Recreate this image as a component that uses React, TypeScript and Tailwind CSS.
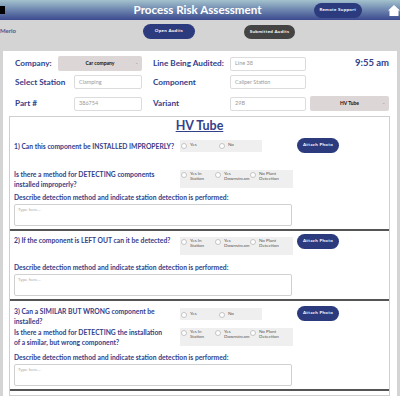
import React from 'react';

const NAVY = 'text-[#34408a]';

const Radio = ({ label }: { label: React.ReactNode }) => (
  <div className="flex items-start gap-[3px]">
    <span className="mt-[1px] h-[6px] w-[6px] shrink-0 rounded-full border border-[#c4c4c4] bg-white" />
    <span className="text-[4.5px] leading-[5px] text-[#555]">{label}</span>
  </div>
);

const YesNo = () => (
  <div className="flex h-[12px] w-[82px] items-center bg-[#efefef] pl-[1px]">
    <div className="w-[38px]">
      <Radio label="Yes" />
    </div>
    <Radio label="No" />
  </div>
);

const Detection = () => (
  <div className="flex h-[18px] w-[113px] items-start bg-[#efefef] pl-[1px] pt-[1px]">
    <div className="w-[34px]">
      <Radio label={<>Yes In<br />Station</>} />
    </div>
    <div className="w-[35px]">
      <Radio label={<>Yes<br />Downstream</>} />
    </div>
    <Radio label={<>No Plant<br />Detection</>} />
  </div>
);

const AttachPhoto = ({ className = '' }: { className?: string }) => (
  <button
    className={`flex h-[15px] w-[42px] items-center justify-center rounded-full bg-[#2c3b7e] text-[4.5px] font-bold tracking-[0.3px] text-white ${className}`}
  >
    Attach Photo
  </button>
);

const Question = ({ children, className = '' }: { children: React.ReactNode; className?: string }) => (
  <div className={`whitespace-nowrap text-[6.75px] font-bold leading-[10px] ${NAVY} ${className}`}>{children}</div>
);

const Describe = () => (
  <>
    <Question>Describe detection method and indicate station detection is performed:</Question>
    <div className="mt-[2px] h-[22px] w-[278px] rounded-[2px] border border-[#d0d0d0] bg-white px-[3px] pt-[2px] text-[4.5px] text-[#aaa]">
      Type here...
    </div>
  </>
);

const Input = ({ value, w }: { value: string; w: string }) => (
  <div className={`flex h-[14px] ${w} items-center rounded-[2px] border border-[#dcdcdc] bg-white pl-[4px] text-[5.5px] text-[#9a9a9a]`}>
    {value}
  </div>
);

const Select = ({ value, w }: { value: string; w: string }) => (
  <div className={`relative flex h-[15px] ${w} items-center justify-center rounded-[2px] bg-[#ddd6d6] text-[5px] font-bold text-[#111]`}>
    {value}
    <span className="absolute right-[4px] top-[4px] text-[4px] text-[#999]">⌄</span>
  </div>
);

const Label = ({ children, w }: { children: React.ReactNode; w: string }) => (
  <div className={`${w} shrink-0 whitespace-nowrap text-[8.2px] font-bold ${NAVY}`}>{children}</div>
);

export default function App() {
  return (
    <div
      className="flex h-[396px] w-[400px] flex-col overflow-hidden bg-[#d4d4d4]"
      style={{ fontFamily: 'Lato, "Open Sans", sans-serif' }}
    >
      {/* Header */}
      <div className="flex h-[20px] shrink-0 items-center overflow-hidden bg-linear-to-b from-[#a3c2cd] to-[#3d4a8e]">
        <div className="w-[138px]">
          <div className="h-[8px] w-[5px] bg-black" />
        </div>
        <div className="w-[124px] whitespace-nowrap text-center text-[11.6px] font-bold leading-none text-white">
          Process Risk Assessment
        </div>
        <button className="ml-[56px] flex h-[15px] w-[50px] items-center justify-center rounded-full bg-[#2c3b7e] text-[4.5px] font-bold tracking-[0.3px] text-white">
          Remote Support
        </button>
        <svg className="ml-[26px] shrink-0" width="12" height="12" viewBox="0 0 12 12">
          <path d="M6 1 L12 6.5 L10.5 6.5 L10.5 12 L1.5 12 L1.5 6.5 L0 6.5 Z" fill="white" />
        </svg>
      </div>

      {/* Sub bar */}
      <div className="flex h-[31px] shrink-0 items-start">
        <div className="w-[143px] pt-[6px] text-[6px] font-bold text-[#4a5590]">Merlo</div>
        <button className="mt-[4px] flex h-[15px] w-[52px] items-center justify-center rounded-full bg-[#2c3b7e] text-[4.5px] font-bold tracking-[0.3px] text-white">
          Open Audits
        </button>
        <button className="ml-[49px] mt-[5px] flex h-[14px] w-[51px] items-center justify-center rounded-full bg-[#444] text-[4.5px] font-bold tracking-[0.3px] text-white">
          Submitted Audits
        </button>
      </div>

      {/* Panel */}
      <div className="ml-[3px] flex w-[394px] flex-1 flex-col bg-white pt-[5px]">
        <div className="flex items-center pl-[12px] pr-[8px]">
          <Label w="w-[43px]">Company:</Label>
          <Select value="Car company" w="w-[84px]" />
          <Label w="ml-[11px] w-[77px]">Line Being Audited:</Label>
          <Input value="Line 38" w="w-[76px]" />
          <div className={`flex-1 text-right text-[9.5px] font-bold ${NAVY}`}>9:55 am</div>
        </div>
        <div className="mt-[4px] flex items-center pl-[12px]">
          <Label w="w-[59px]">Select Station</Label>
          <Input value="Clamping" w="w-[68px]" />
          <Label w="ml-[11px] w-[77px]">Component</Label>
          <Input value="Caliper Station" w="w-[76px]" />
        </div>
        <div className="mt-[7px] flex items-center pl-[12px]">
          <Label w="w-[59px]">Part #</Label>
          <Input value="386754" w="w-[68px]" />
          <Label w="ml-[11px] w-[77px]">Variant</Label>
          <Input value="29B" w="w-[76px]" />
          <div className="ml-[4px]">
            <Select value="HV Tube" w="w-[79px]" />
          </div>
        </div>

        {/* Card */}
        <div className="ml-[6px] mt-[5px] w-[381px] flex-1 border border-[#cfcfcf]">
          <div className={`pt-[1px] text-center text-[12.5px] font-bold leading-[16px] underline ${NAVY}`}>HV Tube</div>

          {/* Section 1 */}
          <div className="flex flex-col px-[4px] pb-[3px] pt-[4px]">
            <div className="grid grid-cols-[166px_117px_auto] items-center">
              <Question>1) Can this component be INSTALLED IMPROPERLY?</Question>
              <YesNo />
              <AttachPhoto />
            </div>
            <div className="mt-[17px] grid grid-cols-[166px_117px_auto] items-start">
              <Question className="-mt-[1px]">
                Is there a method for DETECTING components
                <br />
                installed improperly?
              </Question>
              <Detection />
            </div>
            <div className="mt-[3px]">
              <Describe />
            </div>
          </div>

          {/* Section 2 */}
          <div className="flex flex-col border-t-2 border-[#555] px-[4px] pb-[3px] pt-[3px]">
            <div className="grid grid-cols-[166px_117px_auto] items-start">
              <Question className="mt-[1px]">2) If the component is LEFT OUT can it be detected?</Question>
              <div className="mt-[3px]">
                <Detection />
              </div>
              <AttachPhoto />
            </div>
            <div className="mt-[7px]">
              <Describe />
            </div>
          </div>

          {/* Section 3 */}
          <div className="flex flex-col border-t-2 border-[#555] px-[4px] pb-[3px] pt-[5px]">
            <div className="grid grid-cols-[166px_117px_auto] items-start">
              <Question>
                3) Can a SIMILAR BUT WRONG component be
                <br />
                installed?
              </Question>
              <div className="mt-[2px]">
                <YesNo />
              </div>
              <AttachPhoto />
            </div>
            <div className="mt-[1px] grid grid-cols-[166px_117px_auto] items-start">
              <Question>
                Is there a method for DETECTING the installation
                <br />
                of a similar, but wrong component?
              </Question>
              <div className="mt-[1px]">
                <Detection />
              </div>
            </div>
            <div className="mt-[5px]">
              <Describe />
            </div>
          </div>
          <div className="border-t-2 border-[#555]" />
        </div>
      </div>
    </div>
  );
}
